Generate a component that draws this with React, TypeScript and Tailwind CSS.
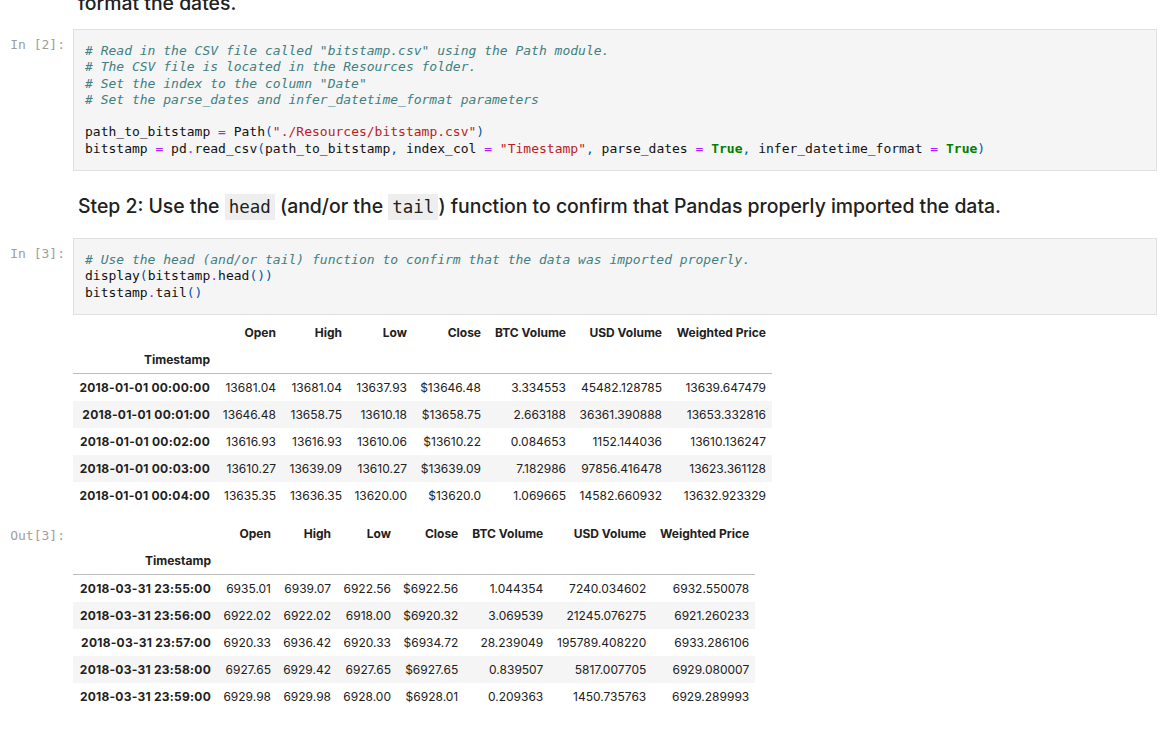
import type { ReactNode } from 'react'

const MONO = "font-['DejaVu_Sans_Mono','Liberation_Mono',monospace]"

function Cm({ children }: { children: ReactNode }) {
  return <span className="italic text-[#408080]">{children}</span>
}
function St({ children }: { children: ReactNode }) {
  return <span className="text-[#ba2121]">{children}</span>
}
function Kw({ children }: { children: ReactNode }) {
  return <span className="font-bold text-[#008000]">{children}</span>
}
function Op({ children }: { children: ReactNode }) {
  return <span className="text-[#aa22ff]">{children}</span>
}
function Pu({ children }: { children: ReactNode }) {
  return <span className="text-[#0055aa]">{children}</span>
}

function Prompt({ children }: { children: ReactNode }) {
  return (
    <div className={`w-[73px] shrink-0 pr-[8px] pt-[8px] text-right text-[13px] leading-[16.3px] text-[#9e9e9e] ${MONO}`}>
      {children}
    </div>
  )
}

function CodeCell({ prompt, children }: { prompt: string; children: ReactNode }) {
  return (
    <div className="flex">
      <Prompt>{prompt}</Prompt>
      <div className="mr-[19px] flex-1 border border-[#e0e0e0] bg-[#f5f5f5] px-[11px] py-[13px]">
        <pre className={`text-[13px] leading-[16.3px] text-[#111] ${MONO}`}>{children}</pre>
      </div>
    </div>
  )
}

const cols = ['Open', 'High', 'Low', 'Close', 'BTC Volume', 'USD Volume', 'Weighted Price']

const headWidths = ['w-[143px]', 'w-[66px]', 'w-[66px]', 'w-[65px]', 'w-[74px]', 'w-[85px]', 'w-[96px]', 'w-[104px]']
const tailWidths = ['w-[144px]', 'w-[60px]', 'w-[60px]', 'w-[60px]', 'w-[67px]', 'w-[85px]', 'w-[103px]', 'w-[103px]']

const headRows = [
  ['2018-01-01 00:00:00', '13681.04', '13681.04', '13637.93', '$13646.48', '3.334553', '45482.128785', '13639.647479'],
  ['2018-01-01 00:01:00', '13646.48', '13658.75', '13610.18', '$13658.75', '2.663188', '36361.390888', '13653.332816'],
  ['2018-01-01 00:02:00', '13616.93', '13616.93', '13610.06', '$13610.22', '0.084653', '1152.144036', '13610.136247'],
  ['2018-01-01 00:03:00', '13610.27', '13639.09', '13610.27', '$13639.09', '7.182986', '97856.416478', '13623.361128'],
  ['2018-01-01 00:04:00', '13635.35', '13636.35', '13620.00', '$13620.0', '1.069665', '14582.660932', '13632.923329'],
]

const tailRows = [
  ['2018-03-31 23:55:00', '6935.01', '6939.07', '6922.56', '$6922.56', '1.044354', '7240.034602', '6932.550078'],
  ['2018-03-31 23:56:00', '6922.02', '6922.02', '6918.00', '$6920.32', '3.069539', '21245.076275', '6921.260233'],
  ['2018-03-31 23:57:00', '6920.33', '6936.42', '6920.33', '$6934.72', '28.239049', '195789.408220', '6933.286106'],
  ['2018-03-31 23:58:00', '6927.65', '6929.42', '6927.65', '$6927.65', '0.839507', '5817.007705', '6929.080007'],
  ['2018-03-31 23:59:00', '6929.98', '6929.98', '6928.00', '$6928.01', '0.209363', '1450.735763', '6929.289993'],
]

function Frame({ widths, rows }: { widths: string[]; rows: string[][] }) {
  const cell = 'whitespace-nowrap px-[6px] py-[6px] text-right leading-[15px]'
  return (
    <table className="table-fixed border-collapse text-[12px] text-[#212121]">
      <colgroup>
        {widths.map((w, i) => (
          <col key={i} className={w} />
        ))}
      </colgroup>
      <thead className="border-b border-[#bdbdbd]">
        <tr>
          <th className={cell} />
          {cols.map((c) => (
            <th key={c} className={`${cell} font-bold`}>
              {c}
            </th>
          ))}
        </tr>
        <tr>
          <th className={`${cell} font-bold`}>Timestamp</th>
          {cols.map((c) => (
            <th key={c} className={cell} />
          ))}
        </tr>
      </thead>
      <tbody>
        {rows.map((r, i) => (
          <tr key={r[0]} className={i % 2 === 1 ? 'bg-[#f5f5f5]' : ''}>
            <th className={`${cell} font-bold tracking-[0.25px]`}>{r[0]}</th>
            {r.slice(1).map((v, j) => (
              <td key={j} className={cell}>
                {v}
              </td>
            ))}
          </tr>
        ))}
      </tbody>
    </table>
  )
}

export default function App() {
  return (
    <div className="h-[734px] w-[1176px] overflow-hidden bg-white font-['Inter','Liberation_Sans',sans-serif] text-[#212121]">
      <h3 className="-mt-[11px] pl-[78px] text-[19.4px] font-medium leading-[28px]">format the dates.</h3>

      <div className="mt-[12px]">
        <CodeCell prompt="In [2]:">
          <Cm># Read in the CSV file called "bitstamp.csv" using the Path module.</Cm>
          {'\n'}
          <Cm># The CSV file is located in the Resources folder.</Cm>
          {'\n'}
          <Cm># Set the index to the column "Date"</Cm>
          {'\n'}
          <Cm># Set the parse_dates and infer_datetime_format parameters</Cm>
          {'\n\n'}
          path_to_bitstamp <Op>=</Op> Path<Pu>(</Pu>
          <St>"./Resources/bitstamp.csv"</St>
          <Pu>)</Pu>
          {'\n'}
          bitstamp <Op>=</Op> pd<Op>.</Op>read_csv<Pu>(</Pu>path_to_bitstamp<Pu>,</Pu> index_col <Op>=</Op>{' '}
          <St>"Timestamp"</St>
          <Pu>,</Pu> parse_dates <Op>=</Op> <Kw>True</Kw>
          <Pu>,</Pu> infer_datetime_format <Op>=</Op> <Kw>True</Kw>
          <Pu>)</Pu>
        </CodeCell>
      </div>

      <h3 className="mt-[21px] pl-[78px] text-[19.4px] font-medium leading-[28px]">
        Step 2: Use the{' '}
        <code className={`bg-[#eeeeee] px-[4px] py-[3px] text-[17.5px] font-normal ${MONO}`}>head</code> (and/or the{' '}
        <code className={`bg-[#eeeeee] px-[4px] py-[3px] text-[17.5px] font-normal ${MONO}`}>tail</code>) function to confirm
        that Pandas properly imported the data.
      </h3>

      <div className="mt-[17px]">
        <CodeCell prompt="In [3]:">
          <Cm># Use the head (and/or tail) function to confirm that the data was imported properly.</Cm>
          {'\n'}
          display<Pu>(</Pu>bitstamp<Op>.</Op>head<Pu>())</Pu>
          {'\n'}
          bitstamp<Op>.</Op>tail<Pu>()</Pu>
        </CodeCell>
      </div>

      <div className="mt-[4px] flex">
        <div className="w-[73px] shrink-0" />
        <Frame widths={headWidths} rows={headRows} />
      </div>

      <div className="mt-[11px] flex">
        <Prompt>Out[3]:</Prompt>
        <Frame widths={tailWidths} rows={tailRows} />
      </div>
    </div>
  )
}
